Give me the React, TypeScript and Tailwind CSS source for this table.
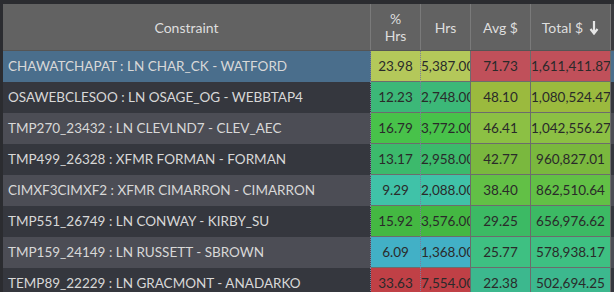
const rows = [
  { name: "CHAWATCHAPAT : LN CHAR_CK - WATFORD", pct: "23.98", hrs: "5,387.00", avg: "71.73", total: "1,611,411.87", c1: "bg-[#b4c85a]", c2: "bg-[#c0505a]", row: "bg-[#4a6e8c]" },
  { name: "OSAWEBCLESOO : LN OSAGE_OG - WEBBTAP4", pct: "12.23", hrs: "2,748.00", avg: "48.10", total: "1,080,524.47", c1: "bg-[#3cb878]", c2: "bg-[#9bba3e]", row: "bg-[#35373e]" },
  { name: "TMP270_23432 : LN CLEVLND7 - CLEV_AEC", pct: "16.79", hrs: "3,772.00", avg: "46.41", total: "1,042,556.27", c1: "bg-[#48c24a]", c2: "bg-[#8cc044]", row: "bg-[#4c4d55]" },
  { name: "TMP499_26328 : XFMR FORMAN - FORMAN", pct: "13.17", hrs: "2,958.00", avg: "42.77", total: "960,827.01", c1: "bg-[#3cba6c]", c2: "bg-[#7ab83e]", row: "bg-[#35373e]" },
  { name: "CIMXF3CIMXF2 : XFMR CIMARRON - CIMARRON", pct: "9.29", hrs: "2,088.00", avg: "38.40", total: "862,510.64", c1: "bg-[#40c2a8]", c2: "bg-[#62c046]", row: "bg-[#4c4d55]" },
  { name: "TMP551_26749 : LN CONWAY - KIRBY_SU", pct: "15.92", hrs: "3,576.00", avg: "29.25", total: "656,976.62", c1: "bg-[#44b842]", c2: "bg-[#3cba64]", row: "bg-[#35373e]" },
  { name: "TMP159_24149 : LN RUSSETT - SBROWN", pct: "6.09", hrs: "1,368.00", avg: "25.77", total: "578,938.17", c1: "bg-[#42b0c6]", c2: "bg-[#3ec082]", row: "bg-[#4c4d55]" },
  { name: "TEMP89_22229 : LN GRACMONT - ANADARKO", pct: "33.63", hrs: "7,554.00", avg: "22.38", total: "502,694.25", c1: "bg-[#c04046]", c2: "bg-[#3cb88e]", row: "bg-[#35373e]" },
]

function SortArrow() {
  return (
    <svg width="10" height="15" viewBox="0 0 10 15" className="ml-[6px]">
      <path d="M5 1 V13" stroke="#e6e6e6" strokeWidth="2.2" />
      <path d="M1.5 9 L5 13.5 L8.5 9" stroke="#e6e6e6" strokeWidth="2.2" fill="none" />
    </svg>
  )
}

export default function App() {
  return (
    <div className="w-[614px] h-[292px] overflow-hidden bg-[#2b2c30] pt-1 pl-[3px] font-['Lato','Liberation_Sans',sans-serif]">
      <div className="w-[700px]">
        <div className="flex h-[47px] bg-[#626262] text-[#dedede] text-[14px] border-b border-[#555]">
          <div className="w-[368px] border-r border-[#7a7a7a] flex items-center justify-center">Constraint</div>
          <div className="w-[50px] border-r border-[#7a7a7a] flex items-center justify-center text-center leading-[17px]">
            %<br />Hrs
          </div>
          <div className="w-[50px] border-r border-[#7a7a7a] flex items-center justify-center">Hrs</div>
          <div className="w-[60px] border-r border-[#7a7a7a] flex items-center justify-center">Avg $</div>
          <div className="w-[80px] border-r border-[#7a7a7a] flex items-center justify-center">
            Total $
            <SortArrow />
          </div>
          <div className="flex-1 bg-[#3a3b3f]" />
        </div>
        {rows.map((r) => (
          <div key={r.name} className="flex h-[31px] leading-[30px] text-[13.5px]">
            <div className={`w-[368px] ${r.row} text-[#d8d8d8] pl-[5px] whitespace-nowrap overflow-hidden border-r border-dotted border-[#7c7c9c]`}>
              {r.name}
            </div>
            <div className={`w-[50px] ${r.c1} text-[#2a2a2a] text-center whitespace-nowrap overflow-hidden border-r border-dotted border-[#7c7c9c] shadow-[inset_0_-1px_0_#6c6c6c]`}>
              {r.pct}
            </div>
            <div className={`w-[50px] ${r.c1} text-[#2a2a2a] text-center whitespace-nowrap overflow-hidden border-r border-b border-[#6c6c6c]`}>
              {r.hrs}
            </div>
            <div className={`w-[60px] ${r.c2} text-[#2a2a2a] text-center whitespace-nowrap overflow-hidden border-r border-b border-[#6c6c6c]`}>
              {r.avg}
            </div>
            <div className={`w-[80px] ${r.c2} text-[#2a2a2a] text-center whitespace-nowrap overflow-hidden border-r border-b border-[#6c6c6c]`}>
              {r.total}
            </div>
            <div className={`flex-1 ${r.row}`} />
          </div>
        ))}
      </div>
    </div>
  )
}
